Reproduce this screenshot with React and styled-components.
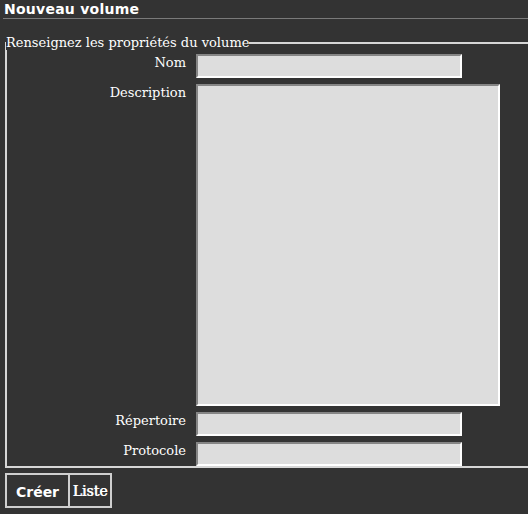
import styled, {createGlobalStyle} from 'styled-components';

const GlobalStyle = createGlobalStyle`
    html, body {
        margin: 0;
        padding: 0;
        background: #333333;
        overflow: hidden;
    }
    body {
        font-family: "DejaVu Serif", serif;
        color: #ffffff;
    }
`

const Page = styled.div`
    width: 528px;
    height: 514px;
    background: #333333;
    overflow: hidden;
`

const Title = styled.h1`
    margin: 0 0 0 3px;
    padding: 2px 0 1px 1px;
    font-family: "DejaVu Sans", sans-serif;
    font-size: 14px;
    font-weight: bold;
    line-height: 15px;
    letter-spacing: 0.25px;
    color: #ffffff;
    border-bottom: 1px solid #7a7a7a;
`

const Fieldset = styled.fieldset`
    margin: 16px 0 0 5px;
    padding: 4px 0 0 0;
    width: 560px;
    border: 2px solid #d6d6d6;
    border-right: none;
    box-sizing: border-box;
`

const Legend = styled.legend`
    padding: 0;
    margin-left: -1px;
    font-size: 13px;
    line-height: 15px;
    color: #ffffff;
`

const Grid = styled.div`
    display: grid;
    grid-template-columns: 179px auto;
    column-gap: 10px;
    row-gap: 6px;
    justify-content: start;
`

const Label = styled.label`
    text-align: right;
    font-size: 13px;
    line-height: 15px;
    padding-top: 1px;
    color: #ffffff;
`

const fieldBorder = `
    border-style: solid;
    border-width: 2px;
    border-color: #858585 #ffffff #ffffff #858585;
    background: #dddddd;
    box-sizing: border-box;
    margin: 0;
    padding: 2px;
    font-family: "DejaVu Sans", sans-serif;
    font-size: 13px;
    outline: none;
`

const Input = styled.input`
    ${fieldBorder}
    width: 266px;
    height: 24px;
`

const TextArea = styled.textarea`
    ${fieldBorder}
    width: 304px;
    height: 322px;
    resize: none;
    display: block;
`

const Actions = styled.div`
    display: flex;
    margin: 5px 0 0 5px;
`

const Button = styled.button`
    height: 35px;
    box-sizing: border-box;
    border: 2px solid #cfcfcf;
    background: #333333;
    color: #ffffff;
    font-family: "DejaVu Sans", sans-serif;
    font-size: 14px;
    font-weight: bold;
    padding: 3px 8px 0 8px;
    width: 65px;
    cursor: pointer;
`

const LinkButton = styled.a`
    display: flex;
    align-items: center;
    justify-content: center;
    height: 35px;
    width: 44px;
    margin-left: -2px;
    padding-top: 1px;
    box-sizing: border-box;
    border: 2px solid #cfcfcf;
    color: #ffffff;
    font-family: "DejaVu Serif", serif;
    font-size: 14px;
    font-weight: normal;
    text-shadow: 0.7px 0 0 #ffffff;
    text-decoration: none;
    cursor: pointer;
`

function App() {
    return (
        <Page>
            <GlobalStyle />
            <Title>Nouveau volume</Title>
            <Fieldset>
                <Legend>Renseignez les propriétés du volume</Legend>
                <Grid>
                    <Label>Nom</Label>
                    <Input />
                    <Label>Description</Label>
                    <TextArea />
                    <Label>Répertoire</Label>
                    <Input />
                    <Label>Protocole</Label>
                    <Input />
                </Grid>
            </Fieldset>
            <Actions>
                <Button>Créer</Button>
                <LinkButton href="#">Liste</LinkButton>
            </Actions>
        </Page>
    )
}

export default App
